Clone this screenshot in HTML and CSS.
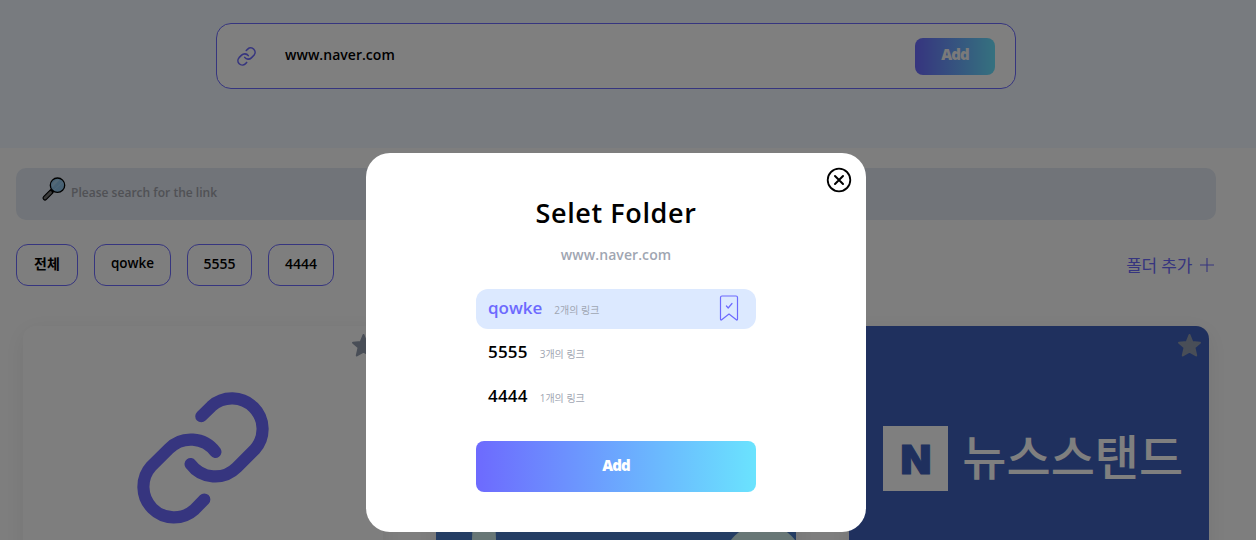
FILE: index.html
```html
<!DOCTYPE html>
<html lang="ko">
<head>
<meta charset="utf-8">
<title>Folder</title>
<link rel="stylesheet" href="styles.css">
</head>
<body>
<svg class="defs" width="0" height="0">
  <symbol id="link" viewBox="137.7 392.7 130.6 130.6" overflow="visible">
    <path d="M201.3 416.7L211.3 406.9A30.3 30.3 0 0 1 254.1 449.7L236.4 467.4A30.3 30.3 0 0 1 190.7 464M204.3 499L194.7 508.9A30.3 30.3 0 0 1 151.9 466.1L169.3 448.9A30.3 30.3 0 0 1 215.3 452" fill="none" stroke="currentColor" stroke-linecap="round"/>
  </symbol>
  <symbol id="star" viewBox="0 0 24 24">
    <path d="M12 2L14.7 8.7L22 9.3L16.7 14L18.4 21.5L12 17.8L5.6 21.5L7.3 14L2 9.3L9.3 8.7Z" fill="currentColor" stroke="currentColor" stroke-width="2" stroke-linejoin="round"/>
  </symbol>
</svg>
<div class="page">
  <header class="hero">
    <form class="link-form">
      <svg class="link-icon"><use href="#link"/></svg>
      <span class="link-value">www.naver.com</span>
      <button class="add-button" type="button">Add</button>
    </form>
  </header>
  <main class="content">
    <div class="search">
      <svg class="search-icon" viewBox="0 0 24 24">
        <path d="M9.5 14.5L3 21" stroke="#000" stroke-width="5" stroke-linecap="round"/>
        <path d="M8.5 15.5L3 21" stroke="#777" stroke-width="2.8" stroke-linecap="round"/>
        <circle cx="15.5" cy="8.2" r="7.2" fill="#8fc3e8" stroke="#000" stroke-width="1.3"/>
        <path d="M10.5 10L17 3A6 6 0 0 0 10.5 10M12 13L21 5" fill="#a9d2ee" stroke="#a9d2ee" stroke-width=".8"/>
      </svg>
      <span class="placeholder">Please search for the link</span>
    </div>
    <div class="folder-bar">
      <nav class="chips">
        <button class="chip chip-all">전체</button>
        <button class="chip chip-word">qowke</button>
        <button class="chip chip-five">5555</button>
        <button class="chip chip-four">4444</button>
      </nav>
      <div class="new-folder"><span>폴더 추가</span>
        <svg width="16" height="16" viewBox="0 0 16 16"><path d="M8 1V15M1 8H15" stroke="currentColor" stroke-width="1.1"/></svg>
      </div>
    </div>
    <section class="cards">
      <article class="card">
        <svg class="star"><use href="#star"/></svg>
        <svg class="card-link"><use href="#link"/></svg>
      </article>
      <article class="card card-art">
        <svg width="360" height="240" viewBox="0 0 360 240"><ellipse cx="48" cy="213" rx="12" ry="30" fill="#d0eeec"/><circle cx="327" cy="238" r="40" fill="#d0eeec"/></svg>
      </article>
      <article class="card card-news">
        <svg class="star"><use href="#star"/></svg>
        <div class="news-logo"><span class="news-mark">N</span><span class="news-name">뉴스스탠드</span></div>
      </article>
    </section>
  </main>
</div>
<div class="overlay">
  <div class="modal">
    <button class="close" aria-label="Close">
      <svg width="26" height="26" viewBox="0 0 26 26" fill="none" stroke="#000" stroke-linecap="round"><circle cx="13" cy="13" r="11.3" stroke-width="1.8"/><path d="M9 9L17 17M17 9L9 17" stroke-width="2"/></svg>
    </button>
    <h1 class="modal-title">Selet Folder</h1>
    <p class="modal-url">www.naver.com</p>
    <ul class="folders">
      <li class="folder folder-active"><span class="folder-name">qowke</span><span class="folder-count">2개의 링크</span>
        <svg class="bookmark" width="20" height="28" viewBox="0 0 20 28" fill="none" stroke="currentColor" stroke-width="1.2" stroke-linejoin="round" stroke-linecap="round"><path d="M3 2H17Q18.5 2 18.5 3.5V25Q18.5 26.8 17 25.5L10 20L3 25.5Q1.5 26.8 1.5 25V3.5Q1.5 2 3 2ZM7.4 12L9.2 14L13 9.5"/></svg>
      </li>
      <li class="folder"><span class="folder-name folder-num">5555</span><span class="folder-count">3개의 링크</span></li>
      <li class="folder"><span class="folder-name folder-num">4444</span><span class="folder-count">1개의 링크</span></li>
    </ul>
    <button class="submit">Add</button>
  </div>
</div>
</body>
</html>
```
FILE: styles.css
```css
* { box-sizing: border-box; }
body { margin: 0; font-family: "Open Sans", "Noto Sans CJK KR", sans-serif; overflow: hidden; color: #000; }
button { font: inherit; border: 0; padding: 0; background: none; color: inherit; }
.defs { display: block; position: absolute; }
.page { height: 540px; overflow: hidden; background: #fdfdfd; }
.hero { height: 148px; padding: 23px 24px 0 0; background: #f0f6ff; display: flex; justify-content: center; align-items: flex-start; }
.link-form { width: 800px; height: 66px; border: 1px solid #6d6afe; border-radius: 15px; background: #fff; display: flex; align-items: center; padding: 0 20px; }
.link-icon { width: 19px; height: 19px; color: #6d6afe; stroke-width: 11; overflow: visible; }
.link-value { flex: 1; margin-left: 29px; padding-bottom: 3px; font-size: 14px; font-weight: 600; letter-spacing: .03px; }
.add-button { width: 80px; height: 37px; border-radius: 8px; background: linear-gradient(90deg, #6d6afe, #6ae3fe); color: #f5f5f5; font-size: 15px; font-weight: 800; letter-spacing: -.9px; padding-bottom: 4px; }
.content { width: 1232px; padding: 20px 16px 0; }
.search { height: 52px; border-radius: 10px; background: #e2e8f2; display: flex; align-items: center; padding: 0 26px; gap: 5px; }
.search-icon { width: 24px; height: 24px; margin-top: -10px; overflow: visible; }
.placeholder { color: #a0a3aa; font-size: 12px; font-weight: 600; margin-top: -4px; letter-spacing: .02px; }
.folder-bar { display: flex; justify-content: space-between; align-items: center; height: 42px; margin-top: 24px; }
.chips { display: flex; gap: 16px; }
.chip { height: 42px; border: 1px solid #6d6afe; border-radius: 12px; font-size: 14px; font-weight: 600; padding-bottom: 4px; }
.chip-all { width: 62px; font-size: 14px; }
.chip-word { width: 77px; font-size: 13.5px; }
.chip-five { width: 65px; }
.chip-four { width: 66px; }
.new-folder { display: flex; align-items: center; gap: 7px; color: #6d6afe; font: 400 17px/24px "Noto Sans CJK KR", sans-serif; letter-spacing: -.3px; padding-right: 1px; }
.cards { display: grid; grid-template-columns: repeat(3, 1fr); column-gap: 40px; justify-items: center; margin-top: 40px; }
.card { position: relative; width: 360px; height: 334px; border-radius: 13px; box-shadow: 0 5px 25px rgba(0, 0, 0, .08); overflow: hidden; }
.card-art { background: #4b7dc8; }
.card-news { background: #3e60bc; padding: 100px 0 0 34px; }
.star { position: absolute; top: 7px; right: 7px; width: 25px; height: 25px; color: #929cae; }
.card-link { display: block; width: 132px; height: 132px; margin: 66px 0 0 114px; color: #6d6afe; stroke-width: 12; overflow: visible; }
.news-logo { display: flex; align-items: center; gap: 14px; height: 65px; color: #fff; white-space: nowrap; }
.news-mark { width: 65px; height: 65px; background: #fff; color: #3e60bc; font: 900 40px/67px "Inter", sans-serif; text-align: center; -webkit-text-stroke: 1px #3e60bc; }
.news-name { font: 500 48px/60px "Noto Sans CJK KR", sans-serif; padding-bottom: 9px; }
.overlay { position: fixed; inset: 0; background: rgba(0, 0, 0, .5); padding: 153px 24px 0 0; display: flex; justify-content: center; align-items: flex-start; }
.modal { position: relative; width: 500px; height: 379px; border-radius: 24px; background: #fff; display: flex; flex-direction: column; align-items: center; padding-top: 40px; }
.close { position: absolute; top: 14px; right: 14px; width: 26px; height: 26px; }
.close svg { display: block; }
.modal-title { margin: 0; font-size: 27px; line-height: 40px; font-weight: 600; letter-spacing: .6px; }
.modal-url { margin: 12px 0 0; color: #9fa6b2; font-size: 14px; line-height: 20px; font-weight: 600; letter-spacing: .08px; }
.folders { list-style: none; margin: 24px 0 0; padding: 0; width: 280px; display: grid; gap: 4px; }
.folder { height: 40px; border-radius: 12px; padding: 0 17px 4px 12px; display: flex; align-items: center; gap: 12px; }
.folder-active { background: #dce9ff; color: #6d6afe; }
.folder-name { font-size: 17px; font-weight: 600; }
.folder-num { letter-spacing: .2px; }
.folder-count { font-size: 10px; color: #9fa6b2; padding-top: 4px; letter-spacing: 0; }
.bookmark { margin-left: auto; margin-top: 1px; }
.submit { margin-top: 24px; width: 280px; height: 51px; border-radius: 8px; background: linear-gradient(90deg, #6d6afe, #6ae3fe); color: #fff; font-size: 15px; font-weight: 800; letter-spacing: -.9px; padding-bottom: 3px; }
```
